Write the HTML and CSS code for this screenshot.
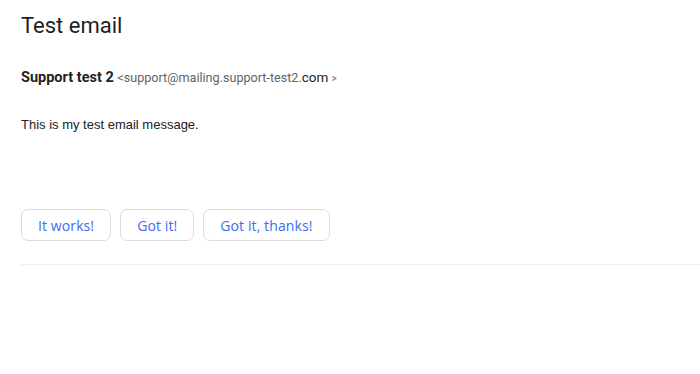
FILE: index.html
```html
<!doctype html>
<html>
<head>
    <title>Test email</title>
    <link rel="stylesheet" href="styles.css">
</head>
<body>

<div class="message">
    <h2 class="subject">Test email</h2>

    <div class="sender">
        <span class="sender-name">Support test 2</span>
        <span class="sender-email">&lt;support@mailing.support-test2.<span class="tld">com</span> <span class="close">&gt;</span></span>
    </div>

    <div class="body-text">This is my test email message.</div>

    <div class="replies">
        <button class="reply">It works!</button>
        <button class="reply">Got it!</button>
        <button class="reply">Got it, thanks!</button>
    </div>

    <div class="divider"></div>
</div>

</body>
</html>
```

FILE: styles.css
```css
body {
    background: white;
    color: #222;
    margin: 0;
    font-family: Roboto, "Liberation Sans", sans-serif;
}

.message {
    padding: 12px 0 0 21px;
}

.subject {
    font-weight: 400;
    font-size: 22px;
    line-height: 28px;
    margin: 0;
    color: #1f1f1f;
}

.sender {
    margin-top: 27px;
    font-size: 14.5px;
    line-height: 20px;
}
.sender-name {
    font-weight: bold;
    color: #1f1f1f;
}
.sender-email {
    font-size: 12.6px;
    color: #5f6368;
}
.sender-email .tld {
    font-size: 13.5px;
    color: #222;
}
.sender-email .close {
    font-size: 10px;
}

.body-text {
    margin-top: 27px;
    font-family: Arial, "Liberation Sans", sans-serif;
    font-size: 13px;
    line-height: 18px;
    color: #222;
}

.replies {
    margin-top: 75px;
    display: flex;
    gap: 9px;
}
.reply {
    background: white;
    border: 1px solid #dadce0;
    border-radius: 7px;
    height: 32px;
    padding: 0 16px;
    font-family: "Open Sans", Roboto, sans-serif;
    font-weight: 500;
    font-size: 14px;
    letter-spacing: 0.1px;
    color: #3b6cf0;
    cursor: pointer;
}

.divider {
    margin-top: 23px;
    border-top: 1px solid #eceeef;
}
```
